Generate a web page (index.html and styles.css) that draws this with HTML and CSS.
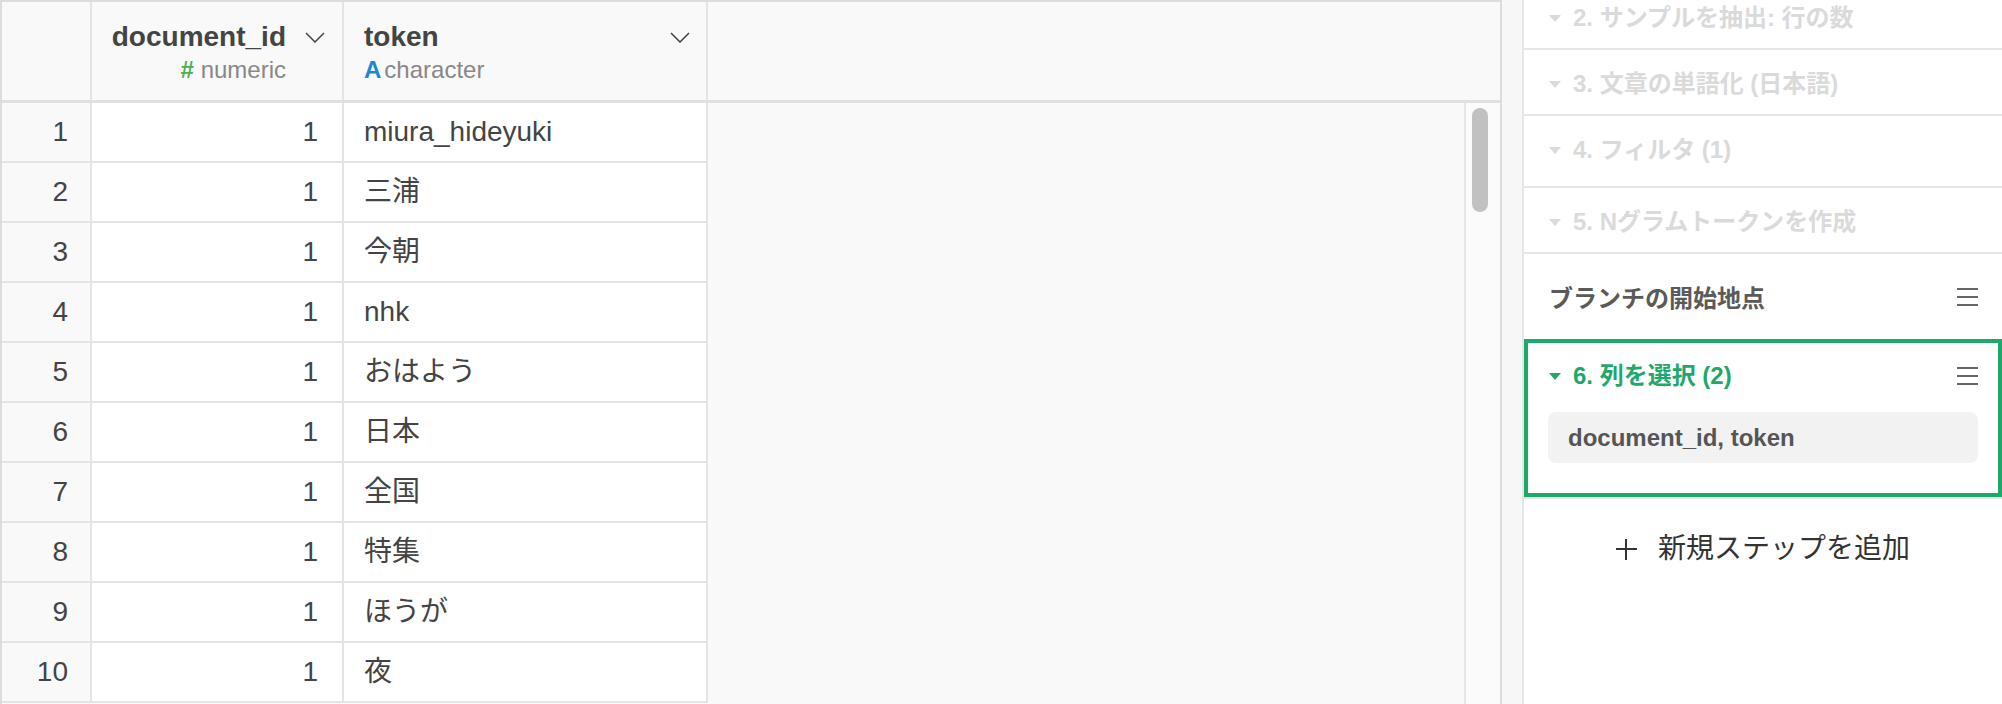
FILE: index.html
```html
<!DOCTYPE html>
<html lang="ja">
<head>
    <meta charset="UTF-8">
    <title>列を選択</title>
    <link rel="stylesheet" href="styles.css">
</head>
<body>
    <div class="grid-pane">
        <div class="grid-head">
            <div class="hcell rownum"></div>
            <div class="hcell col-doc">
                <div class="col-title num">
                    <div class="col-name">document_id</div>
                    <div class="col-type"><span class="type-num">#</span> numeric</div>
                </div>
                <svg class="chevron" width="20" height="11" viewBox="0 0 20 11"><polyline points="1,1 10,10 19,1" fill="none" stroke="#444" stroke-width="1.5"/></svg>
            </div>
            <div class="hcell col-token">
                <div class="col-title">
                    <div class="col-name">token</div>
                    <div class="col-type"><span class="type-chr">A</span>character</div>
                </div>
                <svg class="chevron" width="20" height="11" viewBox="0 0 20 11"><polyline points="1,1 10,10 19,1" fill="none" stroke="#444" stroke-width="1.5"/></svg>
            </div>
            <div class="hfill"></div>
        </div>
        <div class="grid-body">
            <div class="rows">
                <div class="row"><div class="cell rownum">1</div><div class="cell col-doc">1</div><div class="cell col-token">miura_hideyuki</div></div>
                <div class="row"><div class="cell rownum">2</div><div class="cell col-doc">1</div><div class="cell col-token">三浦</div></div>
                <div class="row"><div class="cell rownum">3</div><div class="cell col-doc">1</div><div class="cell col-token">今朝</div></div>
                <div class="row"><div class="cell rownum">4</div><div class="cell col-doc">1</div><div class="cell col-token">nhk</div></div>
                <div class="row"><div class="cell rownum">5</div><div class="cell col-doc">1</div><div class="cell col-token">おはよう</div></div>
                <div class="row"><div class="cell rownum">6</div><div class="cell col-doc">1</div><div class="cell col-token">日本</div></div>
                <div class="row"><div class="cell rownum">7</div><div class="cell col-doc">1</div><div class="cell col-token">全国</div></div>
                <div class="row"><div class="cell rownum">8</div><div class="cell col-doc">1</div><div class="cell col-token">特集</div></div>
                <div class="row"><div class="cell rownum">9</div><div class="cell col-doc">1</div><div class="cell col-token">ほうが</div></div>
                <div class="row"><div class="cell rownum">10</div><div class="cell col-doc">1</div><div class="cell col-token">夜</div></div>
            </div>
            <div class="bfill"></div>
            <div class="scroll-track"><div class="scroll-thumb"></div></div>
        </div>
    </div>

    <div class="steps-pane">
        <div class="steps">
            <div class="step faded"><span class="caret"></span>2. サンプルを抽出: 行の数</div>
            <div class="step faded"><span class="caret"></span>3. 文章の単語化 (日本語)</div>
            <div class="step faded tall"><span class="caret"></span>4. フィルタ (1)</div>
            <div class="step faded"><span class="caret"></span>5. Nグラムトークンを作成</div>
            <div class="branch">
                <span>ブランチの開始地点</span>
                <span class="menu"><i></i><i></i><i></i></span>
            </div>
            <div class="step-active">
                <div class="active-head">
                    <span><span class="caret"></span>6. 列を選択 (2)</span>
                    <span class="menu"><i></i><i></i><i></i></span>
                </div>
                <div class="pill">document_id, token</div>
            </div>
            <div class="add-step"><span class="plus"></span>新規ステップを追加</div>
        </div>
    </div>
</body>
</html>
```

FILE: styles.css
```css
body {
    margin: 0;
    height: 704px;
    overflow: hidden;
    display: flex;
    background: #f7f7f7;
    font-family: "Liberation Sans", Arial, "Noto Sans CJK JP", sans-serif;
    color: #444;
}

/* data grid */
.grid-pane {
    width: 1502px;
    box-sizing: border-box;
    border: 2px solid #dcdcdc;
    border-bottom: none;
    display: flex;
    flex-direction: column;
    background: #f9f9f9;
}

.grid-head {
    display: flex;
    height: 101px;
    box-sizing: border-box;
    border-bottom: 3px solid #e0e0e0;
}

.hcell {
    box-sizing: border-box;
    border-right: 2px solid #e4e4e4;
    display: flex;
    align-items: flex-start;
    padding-top: 18px;
}

.rownum { width: 90px; }
.col-doc { width: 252px; }
.col-token { width: 364px; }

.hcell.col-doc {
    justify-content: flex-end;
    padding-right: 17px;
}

.hcell.col-token {
    justify-content: space-between;
    padding-left: 20px;
    padding-right: 16px;
}

.col-title.num {
    text-align: right;
    margin-right: 19px;
}

.col-name {
    font-size: 28px;
    font-weight: bold;
    line-height: 34px;
    color: #444;
}

.col-type {
    font-size: 24px;
    line-height: 30px;
    margin-top: 1px;
    color: #888;
}

.type-num {
    color: #4caf50;
    font-weight: bold;
}

.type-chr {
    color: #1a8ad6;
    font-weight: bold;
    margin-right: 3px;
}

.chevron {
    margin-top: 12px;
}

.hfill { flex: 1; }

.grid-body {
    display: flex;
    flex: 1;
}

.rows { width: 706px; }

.row {
    display: flex;
    height: 60px;
    box-sizing: border-box;
    border-bottom: 2px solid #e4e4e4;
    background: #fff;
}

.cell {
    box-sizing: border-box;
    border-right: 2px solid #e4e4e4;
    font-size: 28px;
    line-height: 58px;
    white-space: nowrap;
}

.cell.rownum {
    background: #f9f9f9;
    text-align: right;
    padding-right: 22px;
}

.cell.col-doc {
    text-align: right;
    padding-right: 24px;
}

.cell.col-token { padding-left: 20px; }

.bfill { flex: 1; }

.scroll-track {
    width: 28px;
    border-left: 2px solid #e6e6e6;
    background: #fbfbfb;
    padding: 5px 0 0 6px;
}

.scroll-thumb {
    width: 16px;
    height: 104px;
    border-radius: 8px;
    background: #c1c1c1;
}

/* step list */
.steps-pane {
    width: 478px;
    margin-left: 20px;
    border-left: 2px solid #e6e6e6;
    background: #fff;
    overflow: hidden;
}

.steps { margin-top: -16px; }

.step {
    padding: 20px 24px 16px 25px;
    border-bottom: 2px solid #e6e6e6;
    font-size: 24px;
    line-height: 28px;
    font-weight: bold;
}

.step.tall { padding-bottom: 22px; }

.faded { color: #dadada; }

.caret {
    display: inline-block;
    width: 0;
    height: 0;
    border-left: 6px solid transparent;
    border-right: 6px solid transparent;
    border-top: 7px solid currentColor;
    vertical-align: middle;
    margin: -3px 12px 0 0;
}

.branch {
    height: 85px;
    padding: 0 24px 0 25px;
    display: flex;
    align-items: center;
    justify-content: space-between;
    font-size: 24px;
    font-weight: bold;
    color: #5a5a5a;
}

.menu {
    display: flex;
    flex-direction: column;
    justify-content: space-between;
    width: 21px;
    height: 18px;
}

.menu i {
    display: block;
    height: 2px;
    background: #666;
}

.step-active {
    border: 4px solid #1fa86c;
    box-shadow: 0 2px 0 #e6e6e6;
    padding: 19px 20px 30px 20px;
}

.active-head {
    display: flex;
    justify-content: space-between;
    align-items: center;
    padding-left: 1px;
    font-size: 24px;
    line-height: 28px;
    font-weight: bold;
    color: #1fa86c;
}

.pill {
    margin-top: 22px;
    height: 51px;
    line-height: 51px;
    padding-left: 20px;
    border-radius: 8px;
    background: #f2f2f2;
    font-size: 24px;
    font-weight: bold;
    color: #555;
}

.add-step {
    display: flex;
    justify-content: center;
    align-items: center;
    padding-top: 38px;
    line-height: 28px;
    font-size: 28px;
    color: #333;
}

.plus {
    position: relative;
    width: 21px;
    height: 21px;
    margin-right: 21px;
}

.plus::before,
.plus::after {
    content: "";
    position: absolute;
    background: #333;
}

.plus::before { left: 0; right: 0; top: 9px; height: 2px; }
.plus::after { top: 0; bottom: 0; left: 9px; width: 2px; }
```
